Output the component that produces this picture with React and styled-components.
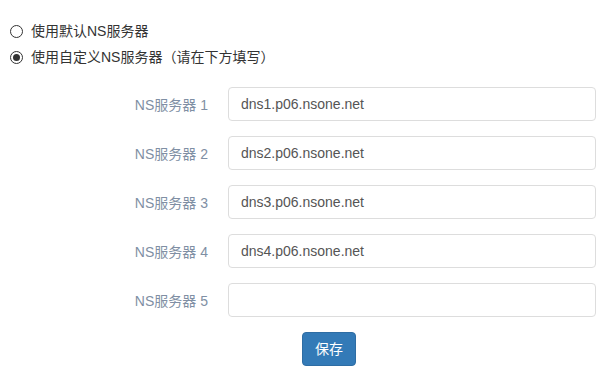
import React from "react";
import styled, { createGlobalStyle } from "styled-components";

const GlobalStyle = createGlobalStyle`
  body {
    margin: 0;
    background: #fff;
    font-family: "Liberation Sans", Arial, "Noto Sans CJK SC", sans-serif;
    font-size: 14px;
    color: #333;
  }
`;

const servers = [
  "dns1.p06.nsone.net",
  "dns2.p06.nsone.net",
  "dns3.p06.nsone.net",
  "dns4.p06.nsone.net",
  "",
];

const App = () => {
  return (
    <Page>
      <GlobalStyle />
      <RadioList>
        <RadioRow>
          <RadioInput type="radio" name="ns" />
          使用默认NS服务器
        </RadioRow>
        <RadioRow>
          <RadioInput type="radio" name="ns" defaultChecked />
          使用自定义NS服务器（请在下方填写）
        </RadioRow>
      </RadioList>

      <Form>
        {servers.map((value, i) => (
          <FormRow key={i}>
            <Label>NS服务器 {i + 1}</Label>
            <TextInput type="text" defaultValue={value} />
          </FormRow>
        ))}
        <Actions>
          <SaveButton type="button">保存</SaveButton>
        </Actions>
      </Form>
    </Page>
  );
};

const Page = styled.div`
  padding: 21px 16px 0 10px;
`;

const RadioList = styled.div`
  display: flex;
  flex-direction: column;
  gap: 6px;
`;

const RadioRow = styled.label`
  display: flex;
  align-items: center;
  height: 20px;
  line-height: 20px;
  color: #333;
  cursor: pointer;
`;

const RadioInput = styled.input`
  appearance: none;
  box-sizing: border-box;
  width: 13px;
  height: 13px;
  margin: 0 8px 0 0;
  border: 1px solid #333;
  border-radius: 50%;
  background: #fff;
  display: grid;
  place-content: center;

  &::before {
    content: "";
    width: 7px;
    height: 7px;
    border-radius: 50%;
    background: #333;
    transform: scale(0);
  }

  &:checked::before {
    transform: scale(1);
  }
`;

const Form = styled.form`
  margin-top: 20px;
  display: flex;
  flex-direction: column;
  gap: 15px;
`;

const FormRow = styled.div`
  display: grid;
  grid-template-columns: 198px 1fr;
  column-gap: 20px;
  align-items: center;
`;

const Label = styled.label`
  text-align: right;
  color: #7f8fa4;
`;

const TextInput = styled.input`
  box-sizing: border-box;
  height: 34px;
  width: 100%;
  padding: 6px 12px;
  border: 1px solid #ddd;
  border-radius: 4px;
  font-family: "Liberation Sans", Arial, sans-serif;
  font-size: 14px;
  color: #555;
  background: #fff;
  outline: none;
`;

const Actions = styled.div`
  padding-left: 292px;
`;

const SaveButton = styled.button`
  box-sizing: border-box;
  height: 34px;
  padding: 6px 12px;
  border: 1px solid #2e6da4;
  border-radius: 4px;
  background: #337ab7;
  color: #fff;
  font-family: "Liberation Sans", Arial, "Noto Sans CJK SC", sans-serif;
  font-size: 14px;
  line-height: 20px;
  cursor: pointer;
`;

export default App;
